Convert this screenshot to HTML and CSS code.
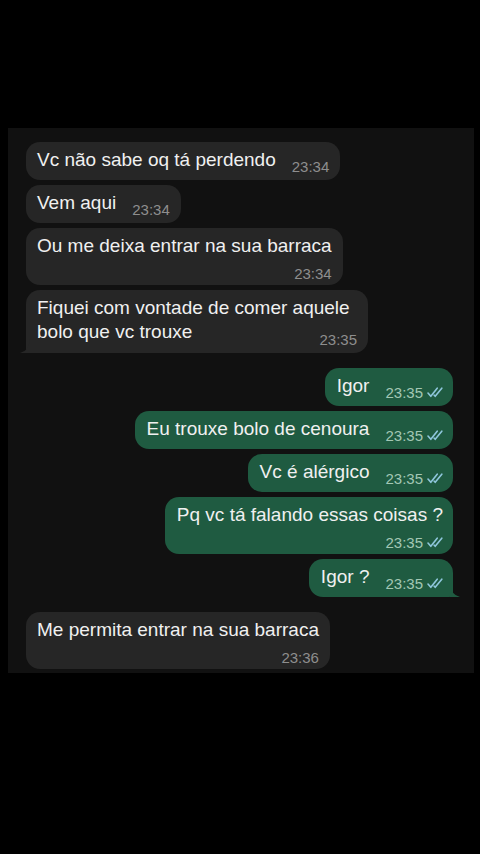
FILE: index.html
```html
<!DOCTYPE html>
<html lang="pt-BR">
<head>
    <meta charset="UTF-8">
    <meta name="viewport" content="width=device-width, initial-scale=1.0">
    <title>Conversa</title>
    <link rel="stylesheet" href="styles.css">
</head>
<body>
    <div class="chat">
        <div class="msg in">
            <span class="text">Vc não sabe oq tá perdendo</span>
            <span class="meta">23:34</span>
        </div>
        <div class="msg in">
            <span class="text">Vem aqui</span>
            <span class="meta">23:34</span>
        </div>
        <div class="msg in stack">
            <span class="text">Ou me deixa entrar na sua barraca</span>
            <span class="meta">23:34</span>
        </div>
        <div class="msg in tuck tail">
            <span class="text">Fiquei com vontade de comer aquele</span>
            <span class="text">bolo que vc trouxe</span>
            <span class="meta">23:35</span>
        </div>

        <div class="msg out first">
            <span class="text">Igor</span>
            <span class="meta">23:35 <svg class="check" viewBox="0 0 16 11"><path d="M1 6 L3.8 9.3 L10.2 1.2 M7.2 8.2 L8.2 9.3 L14.8 1.2"/></svg></span>
        </div>
        <div class="msg out">
            <span class="text">Eu trouxe bolo de cenoura</span>
            <span class="meta">23:35 <svg class="check" viewBox="0 0 16 11"><path d="M1 6 L3.8 9.3 L10.2 1.2 M7.2 8.2 L8.2 9.3 L14.8 1.2"/></svg></span>
        </div>
        <div class="msg out">
            <span class="text">Vc é alérgico</span>
            <span class="meta">23:35 <svg class="check" viewBox="0 0 16 11"><path d="M1 6 L3.8 9.3 L10.2 1.2 M7.2 8.2 L8.2 9.3 L14.8 1.2"/></svg></span>
        </div>
        <div class="msg out stack">
            <span class="text">Pq vc tá falando essas coisas ?</span>
            <span class="meta">23:35 <svg class="check" viewBox="0 0 16 11"><path d="M1 6 L3.8 9.3 L10.2 1.2 M7.2 8.2 L8.2 9.3 L14.8 1.2"/></svg></span>
        </div>
        <div class="msg out tail">
            <span class="text">Igor ?</span>
            <span class="meta">23:35 <svg class="check" viewBox="0 0 16 11"><path d="M1 6 L3.8 9.3 L10.2 1.2 M7.2 8.2 L8.2 9.3 L14.8 1.2"/></svg></span>
        </div>

        <div class="msg in stack first">
            <span class="text">Me permita entrar na sua barraca</span>
            <span class="meta">23:36</span>
        </div>
    </div>
</body>
</html>
```

FILE: styles.css
```css
body {
    margin: 0;
    background-color: #000;
    font-family: "Liberation Sans", Arial, sans-serif;
}
.chat {
    width: 466px;
    margin: 128px 0 0 8px;
    padding: 14px 21px 4px 18px;
    box-sizing: border-box;
    background-color: #111;
    display: flex;
    flex-direction: column;
    gap: 5px;
}
.msg {
    position: relative;
    max-width: 320px;
    padding: 6px 11px 8px 11px;
    border-radius: 14px;
    display: flex;
    align-items: flex-end;
    gap: 16px;
    color: #f0f0f0;
    font-size: 19px;
    line-height: 24px;
}
.msg.first {
    margin-top: 10px;
}
.in {
    align-self: flex-start;
    background-color: #262626;
}
.out {
    align-self: flex-end;
    background-color: #1f5b41;
    padding-left: 12px;
    padding-right: 10px;
}
.meta {
    flex-shrink: 0;
    display: inline-flex;
    align-items: center;
    gap: 4px;
    font-size: 15px;
    line-height: 15px;
    margin-bottom: -2px;
    color: #8e8e8e;
    white-space: nowrap;
}
.out .meta {
    color: #a3c7b4;
}
.check {
    width: 16px;
    height: 11px;
    fill: none;
    stroke: #8fc6dc;
    stroke-width: 1.6;
    stroke-linecap: round;
    stroke-linejoin: round;
}

/* hora numa linha propria */
.stack {
    flex-direction: column;
    align-items: flex-start;
    gap: 0;
    padding-bottom: 7px;
}
.stack .meta {
    align-self: flex-end;
    margin-top: 8px;
    margin-bottom: -3px;
}

/* hora encaixada ao lado da ultima linha */
.tuck {
    display: block;
    padding-bottom: 7px;
}
.tuck .meta {
    float: right;
    margin: 12px 0 -1px 16px;
}

/* rabinho do balao */
.tail::after {
    content: '';
    position: absolute;
    bottom: 0;
    width: 10px;
    height: 14px;
}
.in.tail {
    border-bottom-left-radius: 4px;
}
.in.tail::after {
    left: -6px;
    background-color: #262626;
    clip-path: path('M10 0 Q9 12 0 14 L10 14 Z');
}
.out.tail {
    border-bottom-right-radius: 4px;
}
.out.tail::after {
    right: -7px;
    background-color: #1f5b41;
    clip-path: path('M0 0 Q1 12 10 14 L0 14 Z');
}
```
